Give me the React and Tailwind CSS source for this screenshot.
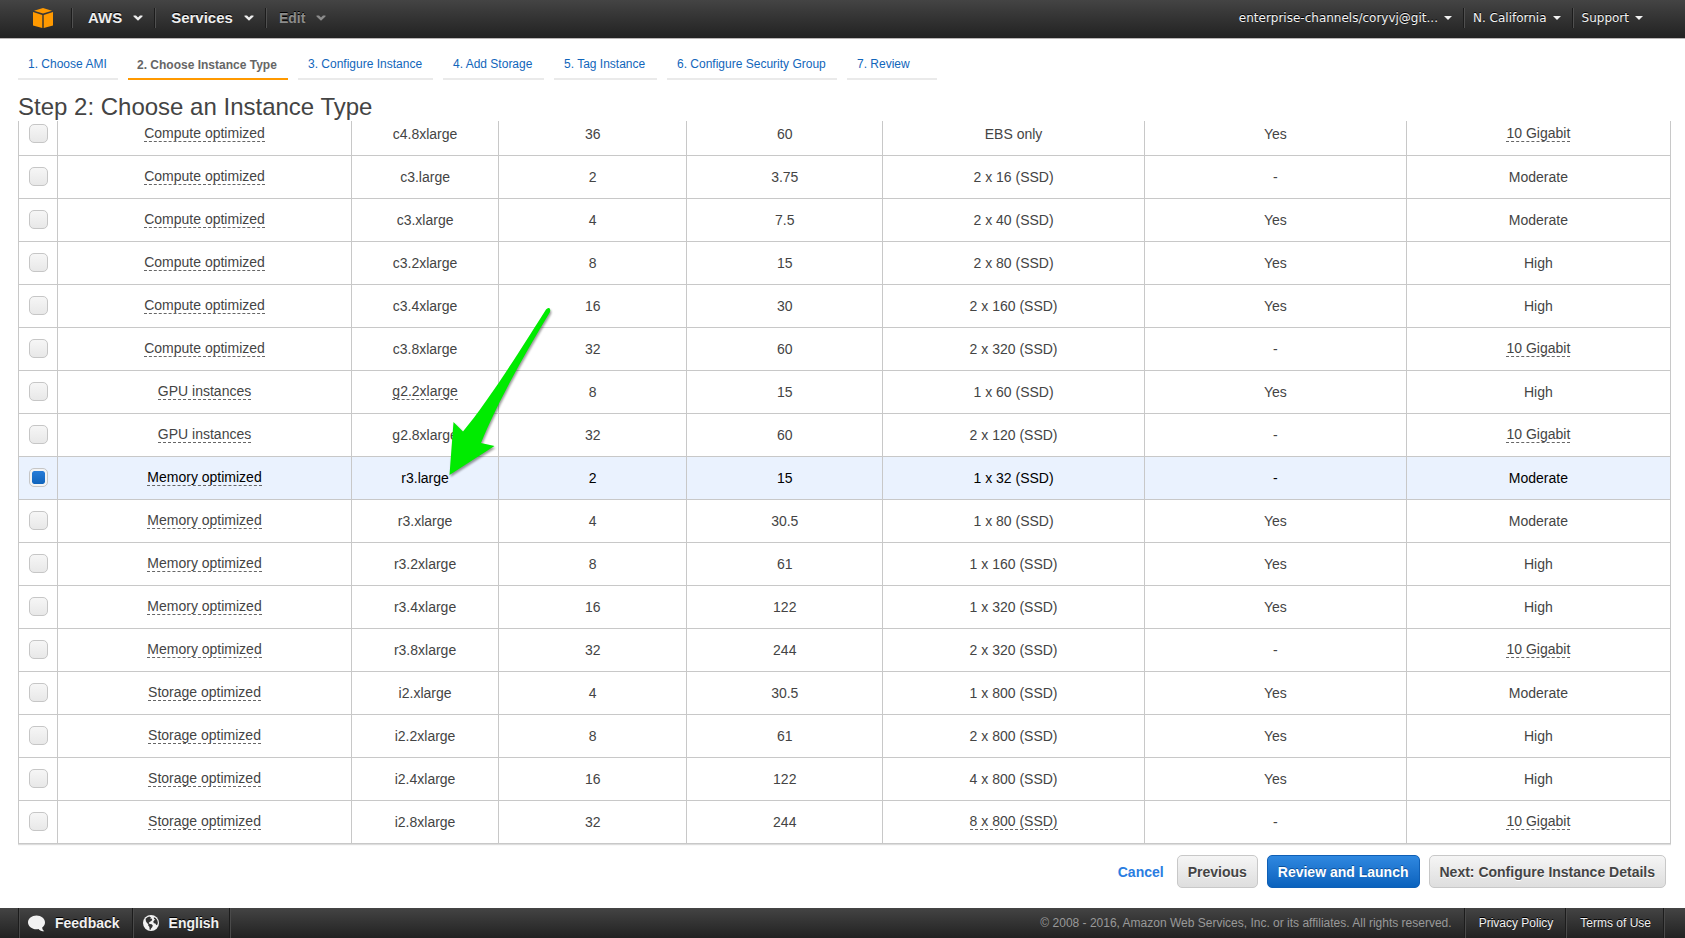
import React, { useState } from "react";

const steps = [
  ["1. Choose AMI", "w-[100px]"],
  ["2. Choose Instance Type", "w-40"],
  ["3. Configure Instance", "w-[135px]"],
  ["4. Add Storage", "w-[101px]"],
  ["5. Tag Instance", "w-[103px]"],
  ["6. Configure Security Group", "w-[170px]"],
  ["7. Review", "w-[90px]"],
];

const C = "Compute optimized";
const G = "GPU instances";
const M = "Memory optimized";
const S = "Storage optimized";

const instances = [
  [C, "c4.8xlarge", "36", "60", "EBS only", "Yes", "10 Gigabit"],
  [C, "c3.large", "2", "3.75", "2 x 16 (SSD)", "-", "Moderate"],
  [C, "c3.xlarge", "4", "7.5", "2 x 40 (SSD)", "Yes", "Moderate"],
  [C, "c3.2xlarge", "8", "15", "2 x 80 (SSD)", "Yes", "High"],
  [C, "c3.4xlarge", "16", "30", "2 x 160 (SSD)", "Yes", "High"],
  [C, "c3.8xlarge", "32", "60", "2 x 320 (SSD)", "-", "10 Gigabit"],
  [G, "g2.2xlarge", "8", "15", "1 x 60 (SSD)", "Yes", "High"],
  [G, "g2.8xlarge", "32", "60", "2 x 120 (SSD)", "-", "10 Gigabit"],
  [M, "r3.large", "2", "15", "1 x 32 (SSD)", "-", "Moderate"],
  [M, "r3.xlarge", "4", "30.5", "1 x 80 (SSD)", "Yes", "Moderate"],
  [M, "r3.2xlarge", "8", "61", "1 x 160 (SSD)", "Yes", "High"],
  [M, "r3.4xlarge", "16", "122", "1 x 320 (SSD)", "Yes", "High"],
  [M, "r3.8xlarge", "32", "244", "2 x 320 (SSD)", "-", "10 Gigabit"],
  [S, "i2.xlarge", "4", "30.5", "1 x 800 (SSD)", "Yes", "Moderate"],
  [S, "i2.2xlarge", "8", "61", "2 x 800 (SSD)", "Yes", "High"],
  [S, "i2.4xlarge", "16", "122", "4 x 800 (SSD)", "Yes", "High"],
  [S, "i2.8xlarge", "32", "244", "8 x 800 (SSD)", "-", "10 Gigabit"],
];

const hinted = new Set([C, G, M, S, "10 Gigabit", "g2.2xlarge", "8 x 800 (SSD)"]);

function Chevron() {
  return (
    <svg width="10" height="6" viewBox="0 0 10 6" fill="currentColor" aria-hidden="true">
      <path d="M0.5 0.5H3L5 2.4L7 0.5H9.5V1.5L5 5.8L0.5 1.5Z" />
    </svg>
  );
}

function Caret() {
  return (
    <svg width="8" height="4" viewBox="0 0 8 4" fill="currentColor" aria-hidden="true">
      <path d="M0 0H8L4 4Z" />
    </svg>
  );
}

function Divider() {
  return <span className="h-5 w-px bg-[#505050] shadow-[-1px_0_0_#1c1c1c]" />;
}

function MenuButton({ children, dim }) {
  return (
    <button
      className={
        "flex items-center gap-[11px] pr-3 leading-5 font-bold [text-shadow:0_-1px_0_#000] " +
        (dim ? "pl-3 text-sm text-[#8c8c8c]" : "pl-[15px] text-[15px] text-[#eee]")
      }
    >
      {children}
      <Chevron />
    </button>
  );
}

function AccountButton({ children }) {
  return (
    <button className="flex items-center gap-[6px] pr-3 pl-2 font-['DejaVu_Sans',Verdana,sans-serif] text-xs leading-5 text-[#f2f2f2] [text-shadow:0_-1px_0_#000]">
      {children}
      <Caret />
    </button>
  );
}

function FooterDivider() {
  return <span className="w-px self-stretch bg-[#4a4a4a] shadow-[-1px_0_0_#1c1c1c]" />;
}

const greyButton =
  "h-[33px] rounded-[5px] border border-[#c8c8c8] bg-linear-to-b from-[#f5f5f5] to-[#dedede] px-[10px] text-sm font-bold text-[#444] [text-shadow:0_1px_0_#fff]";

export default function App() {
  const [selected, setSelected] = useState("r3.large");

  return (
    <div className="relative flex min-h-screen flex-col bg-white font-['Liberation_Sans',Arial,sans-serif] text-[#444]">
      <header className="flex h-[39px] items-center border-b border-[#b9b5b5] bg-linear-to-b from-[#444] to-[#222] pb-[2px] pr-[30px] pl-8">
        <a href="#home" aria-label="Console home" className="mr-[18px]">
          <svg width="22" height="22" viewBox="0 0 22 22" fill="#ff9900" aria-hidden="true">
            <path d="M11 1L20 3.7L11 6.6L2 3.7Z" />
            <path d="M1 5.1L10.3 8V21L1 18.4Z" />
            <path d="M21 5.1L11.7 8V21L21 18.4Z" />
          </svg>
        </a>
        <Divider />
        <MenuButton>AWS</MenuButton>
        <Divider />
        <MenuButton>Services</MenuButton>
        <Divider />
        <MenuButton dim>Edit</MenuButton>
        <div className="ml-auto flex items-center">
          <AccountButton>enterprise-channels/coryvj@git...</AccountButton>
          <Divider />
          <AccountButton>N. California</AccountButton>
          <Divider />
          <AccountButton>Support</AccountButton>
        </div>
      </header>

      <nav className="flex gap-[10px] pt-4 pl-[18px]">
        {steps.map(([label, width], i) => (
          <a
            key={label}
            href={"#step-" + (i + 1)}
            className={
              "h-[25px] border-b-2 whitespace-nowrap text-xs " +
              width +
              (i === 1
                ? " border-[#ff9900] pl-[9px] leading-5 font-bold text-[#666]"
                : " border-[#eaeaea] pl-[10px] leading-[18px] text-[#1166bb]")
            }
          >
            {label}
          </a>
        ))}
      </nav>

      <h1 className="mt-[13px] h-7 pl-[18px] text-2xl leading-7">Step 2: Choose an Instance Type</h1>

      <main className="mr-[14px] ml-[18px] overflow-hidden pb-[2px]">
        <table className="-mt-2 w-full table-fixed border-separate border-spacing-0 border-l border-[#c8c8c8] text-center text-sm leading-4 shadow-[0_1px_1px_#ddd]">
          <colgroup>
            <col className="w-[39px]" />
            <col className="w-[17.8%]" />
            <col className="w-[8.9%]" />
            <col className="w-[11.4%]" />
            <col className="w-[11.85%]" />
            <col className="w-[15.85%]" />
            <col className="w-[15.85%]" />
            <col />
          </colgroup>
          <tbody>
            {instances.map((row) => {
              const on = row[1] === selected;
              return (
                <tr key={row[1]} className={on ? "bg-[#eaf2fe] text-black" : ""}>
                  <td className="h-[43px] border-r border-b border-[#c8c8c8] p-0 pb-[2px]">
                    <input
                      type="checkbox"
                      aria-label={"Select " + row[1]}
                      checked={on}
                      onChange={() => setSelected(row[1])}
                      className="mx-auto block size-[19px] appearance-none rounded-[5px] border border-[#c6c6c6] bg-linear-to-b from-[#f6f6f6] to-[#e8e8e8] checked:from-[#2a80dc] checked:to-[#0a60b8] checked:bg-clip-content checked:p-[2px] checked:shadow-[inset_0_0_0_2px_#f4f4f4]"
                    />
                  </td>
                  {row.map((value, i) => (
                    <td
                      key={i}
                      className={
                        "border-r border-b border-[#c8c8c8] p-0 " + (hinted.has(value) ? "pb-[2px]" : "")
                      }
                    >
                      {hinted.has(value) ? (
                        <span className="inline-block border-b border-dashed border-[#666]">{value}</span>
                      ) : (
                        value
                      )}
                    </td>
                  ))}
                </tr>
              );
            })}
          </tbody>
        </table>
      </main>

      <div className="mt-[9px] mb-5 flex items-center justify-end gap-[9px] pr-[19px]">
        <a href="#cancel" className="mr-1 text-sm font-bold text-[#2a7de1]">
          Cancel
        </a>
        <button className={greyButton}>Previous</button>
        <button className="h-[33px] rounded-[5px] border border-[#0f5fb5] bg-linear-to-b from-[#2f88e0] to-[#0962bd] px-[10px] text-sm font-bold text-white [text-shadow:0_-1px_0_#0a4f9a]">
          Review and Launch
        </button>
        <button className={greyButton}>Next: Configure Instance Details</button>
      </div>

      <footer className="mt-auto flex h-[30px] items-center bg-linear-to-b from-[#444] to-[#222] pr-5 pl-[19px] text-xs text-[#f2f2f2]">
        <FooterDivider />
        <button className="flex items-center gap-[10px] pr-[13px] pl-2 text-sm font-bold [text-shadow:0_-1px_0_#000]">
          <svg width="17" height="17" viewBox="0 0 17 17" fill="#f2f2f2" aria-hidden="true">
            <path d="M8.5 0.6C13.2 0.6 17 3.6 17 7.4C17 9.5 15.9 11.2 14.2 12.4C14.3 14.1 15.1 15.3 16.3 16.3C13.6 16.3 11.6 15.4 10.5 14C9.9 14.1 9.2 14.2 8.5 14.2C3.8 14.2 0 11.1 0 7.4C0 3.6 3.8 0.6 8.5 0.6Z" />
          </svg>
          Feedback
        </button>
        <FooterDivider />
        <button className="flex items-center gap-[10px] pr-[11px] pl-[9px] text-sm font-bold [text-shadow:0_-1px_0_#000]">
          <svg width="16" height="16" viewBox="0 0 16 16" aria-hidden="true">
            <circle cx="8" cy="8" r="8" fill="#f2f2f2" />
            <path
              fill="#333"
              d="M2.6 3.8L4.5 2.3L6.3 1.6L8 2.4L7.3 3.9L8.7 3.6L9.3 4.9L7.8 6.2L6.6 6.9L5.7 8L6.7 8.9L8.7 9.3L9.8 10.5L9.2 12.2L8 13.4L7.5 15L6.6 14.4L6.4 12L5.2 10.6L5.3 9.2L4 8L2.9 6.3Z"
            />
            <path
              fill="#333"
              d="M10.8 2.2L12.6 2.9L14.2 5L14.8 7.2L14.6 9.3L13.4 10.3L12.4 8.6L10.9 8.2L10.2 6.7L11.3 5.3L12.3 4.6L11 3.9Z"
            />
          </svg>
          English
        </button>
        <FooterDivider />
        <p className="mr-[13px] ml-auto text-[#999]">
          © 2008 - 2016, Amazon Web Services, Inc. or its affiliates. All rights reserved.
        </p>
        <FooterDivider />
        <a href="#privacy" className="px-[13px] [text-shadow:0_-1px_0_#000]">
          Privacy Policy
        </a>
        <FooterDivider />
        <a href="#terms" className="px-[13px] [text-shadow:0_-1px_0_#000]">
          Terms of Use
        </a>
        <FooterDivider />
      </footer>

      <svg
        className="pointer-events-none absolute top-[300px] left-[440px] drop-shadow-[1px_2px_1px_rgba(0,0,0,0.4)]"
        width="120"
        height="184"
        viewBox="440 300 120 184"
        aria-hidden="true"
      >
        <path
          fill="#00eb00"
          d="M449.5 475L453.5 422L463 431.5C484 406 508 370 546 309.5Q547.5 307.5 549.2 308Q550.8 309 550 312C520 362 497 404 481 443L494.5 446Z"
        />
      </svg>
    </div>
  );
}
